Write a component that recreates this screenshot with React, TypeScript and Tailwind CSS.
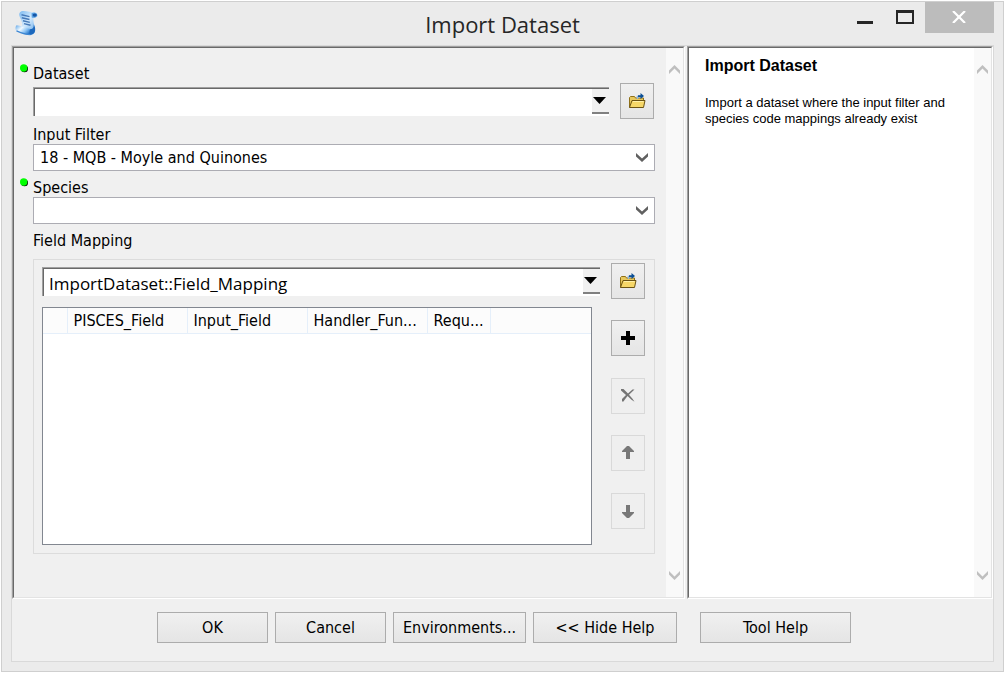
import { useState } from "react";
import type { ReactNode } from "react";

const LABEL = "pt-0.5 text-[16px] leading-[18px] text-black";
const SUNKEN =
  "border-t border-l border-r border-b border-t-[#a0a0a0] border-l-[#a0a0a0] border-r-white border-b-white";
const SUNKEN_INNER =
  "border border-t-[#696969] border-l-[#696969] border-r-[#e3e3e3] border-b-[#e3e3e3]";

function ScriptIcon() {
  return (
    <svg width="24" height="26" viewBox="0 0 24 26" aria-hidden="true">
      <defs>
        <linearGradient id="sheet" x1="0" y1="0" x2="1" y2="1">
          <stop offset="0" stopColor="#7dbaf0" />
          <stop offset="0.45" stopColor="#d3eafd" />
          <stop offset="1" stopColor="#4a98e2" />
        </linearGradient>
        <linearGradient id="roll" x1="0" y1="0" x2="1" y2="0.6">
          <stop offset="0" stopColor="#5fa6e8" />
          <stop offset="0.4" stopColor="#f2faff" />
          <stop offset="0.7" stopColor="#8cc4f5" />
          <stop offset="1" stopColor="#1d6fc6" />
        </linearGradient>
      </defs>
      <path d="M6 1.500C9 .3 15 2.200 20.500 2.700c2.500.4 2.800 3.900.6 4.600L18.500 8c-.8 4 2 8.500 1.500 13-.3 2.300-2 3.700-4 3.700L6 18.500C9.500 14 5 8.500 4.300 5.500 4 4 4.500 2.300 6 1.500Z" fill="url(#sheet)" />
      <path d="M16.500 3.200c2.500-1.300 5.800-.6 5.600 2.100-.3 2.600-3.600 2.900-5.400 2.300Z" fill="#5aa2e4" />
      <ellipse cx="19.700" cy="5.100" rx="2.100" ry="1.700" fill="#1656a6" />
      <path d="M6.500 4.800 14.500 6.600M6.800 7.700l7.700 1.800M8 10.700l6.800 1.700M9 13.600l6.500 1.600" stroke="#4679b8" strokeWidth="1.400" />
      <path d="M1.500 15.200c4 .2 9.500 2.500 14 3.700 1.800.7 2.200 4.700.2 5.800C11 25 5 22.700 1.300 21.200.2 19.700.2 16.200 1.500 15.200Z" fill="url(#roll)" />
      <path d="M1.500 20.900c4 1.700 9.500 3.900 14 3.800" stroke="#3d86d2" strokeWidth="1.200" fill="none" />
      <path d="M15.300 19.300c3-.3 3.800-2.500 3.300-5 2.300 3.500 2.700 9.500-2.500 10.400-1.800.1-2-4.400-.8-5.400Z" fill="#1c68bd" />
    </svg>
  );
}

function FolderIcon() {
  return (
    <svg width="17" height="16" viewBox="0 0 17 16" aria-hidden="true">
      <path d="M.5 14.500V4.500l1-1h4l1 1.500h8v3" fill="#e8c85c" stroke="#8f7018" />
      <path d="M.5 14.500 3 7.500h13l-1.500 7Z" fill="#f6d768" stroke="#6b5312" />
      <path d="M4 8.500h10.500" stroke="#fff0a8" />
      <path d="M8.500 6V3.500h3" fill="none" stroke="#8fb6dc" strokeWidth="1.500" />
      <path d="M9 2.200h2.500V0l3.500 3-3.500 3V4H9Z" fill="#0b4f96" />
    </svg>
  );
}

function ScrollChevron({ down = false }: { down?: boolean }) {
  return (
    <svg width="11" height="9" viewBox="0 0 11 9" aria-hidden="true">
      <path
        d={down ? "M0 0v3.500L5.500 9 11 3.500V0L5.500 5.500Z" : "M0 9V5.500L5.500 0 11 5.500V9L5.500 3.500Z"}
        fill="#bfbfbf"
      />
    </svg>
  );
}

function ScrollBar() {
  return (
    <div className="flex w-[17px] shrink-0 flex-col items-center justify-between bg-[#f9f9f9] py-[17px]">
      <button type="button" aria-label="Scroll up"><ScrollChevron /></button>
      <button type="button" aria-label="Scroll down"><ScrollChevron down /></button>
    </div>
  );
}

function Pane({ className, children }: { className: string; children: ReactNode }) {
  return (
    <div className={`flex ${SUNKEN} ${className}`}>
      <div className={`flex min-w-0 flex-1 ${SUNKEN_INNER}`}>
        {children}
        <ScrollBar />
      </div>
    </div>
  );
}

function FieldLabel({ id, required = false, children }: { id: string; required?: boolean; children: string }) {
  return (
    <label htmlFor={id} className={`flex ${LABEL}`}>
      {required && (
        <span className="-mt-px -ml-[13px] w-[13px]">
          <svg width="8" height="9" viewBox="0 0 8 9" aria-hidden="true">
            <circle cx="4.500" cy="4.800" r="3.500" fill="#000" />
            <circle cx="3.700" cy="4" r="3.700" fill="#00ff00" />
          </svg>
        </span>
      )}
      {children}
    </label>
  );
}

function PathCombo({ id, initial = "" }: { id: string; initial?: string }) {
  const [value, setValue] = useState(initial);
  return (
    <div className="flex h-[29px] min-w-0 flex-1 border-t border-l border-[#a0a0a0] bg-white">
      <div className="flex min-w-0 flex-1 border-t border-l border-[#696969]">
        <input
          id={id}
          value={value}
          onChange={(e) => setValue(e.target.value)}
          className="min-w-0 flex-1 px-[5px] pt-1 font-['Open_Sans',sans-serif] text-[17px] leading-6 text-black outline-none"
        />
        <button
          type="button"
          aria-label="Show list"
          className="mb-0.5 flex w-[17px] items-center justify-center border-b-2 border-[#808080] bg-[#f0f0f0] pr-0.5"
        >
          <svg width="13" height="7" viewBox="0 0 13 7" aria-hidden="true">
            <path d="M0 0h13L6.500 7Z" fill="#000" />
          </svg>
        </button>
      </div>
    </div>
  );
}

function DropDown({ id, options }: { id: string; options: string[] }) {
  return (
    <div className="relative">
      <select
        id={id}
        className="block h-[27px] w-full appearance-none border border-[#acacb3] bg-white pr-8 pl-1.5 text-[16px] leading-6 text-black outline-none"
      >
        {options.map((o) => (
          <option key={o}>{o}</option>
        ))}
      </select>
      <svg className="pointer-events-none absolute top-[9px] right-[7px]" width="12" height="9" viewBox="0 0 12 9" aria-hidden="true">
        <path d="M0 0v3.500L6 9l6-5.500V0L6 5.500Z" fill="#606060" />
      </svg>
    </div>
  );
}

function ToolButton({ label, disabled = false, children }: { label: string; disabled?: boolean; children: ReactNode }) {
  return (
    <button
      type="button"
      aria-label={label}
      disabled={disabled}
      className="flex h-9 w-[34px] shrink-0 items-center justify-center border border-[#acacac] bg-linear-to-b from-[#f0f0f0] to-[#e5e5e5] disabled:border-[#d9d9d9] disabled:from-[#efefef] disabled:to-[#efefef]"
    >
      {children}
    </button>
  );
}

function FooterButton({ className, children }: { className: string; children: string }) {
  return (
    <button
      type="button"
      className={`h-[31px] border border-[#acacac] bg-linear-to-b from-[#f0f0f0] to-[#e5e5e5] pt-px text-[16px] leading-6 whitespace-nowrap text-black ${className}`}
    >
      {children}
    </button>
  );
}

const COLUMNS = [
  { title: "", width: "w-6" },
  { title: "PISCES_Field", width: "w-[120px]" },
  { title: "Input_Field", width: "w-[120px]" },
  { title: "Handler_Fun...", width: "w-[120px]" },
  { title: "Requ...", width: "w-[63px]" },
];

export default function App() {
  return (
    <div className="min-h-screen bg-white p-px font-['DejaVu_Sans_Condensed','Noto_Sans',sans-serif]">
      <main className="flex min-h-[calc(100vh-2px)] flex-col border border-[#cfcfcf] bg-[#ebebeb]">
        <header className="grid h-[43px] grid-cols-[1fr_auto_1fr] items-start">
          <div className="pt-2 pl-[13px]"><ScriptIcon /></div>
          <h1 className="pt-[7px] font-['Open_Sans',sans-serif] text-[22px] leading-[30px] text-[#262626]">Import Dataset</h1>
          <div className="flex justify-end pr-[9px]">
            <button type="button" aria-label="Minimize" className="flex h-[31px] w-10 items-start justify-center">
              <svg width="16" height="22" viewBox="0 0 16 22" aria-hidden="true"><path d="M0 19h16v3H0Z" fill="#262626" /></svg>
            </button>
            <button type="button" aria-label="Maximize" className="flex h-[31px] w-10 items-start justify-center pt-2">
              <svg width="18" height="14" viewBox="0 0 18 14" aria-hidden="true"><path d="M0 0h18v14H0ZM2 3v9h14V3Z" fill="#262626" fillRule="evenodd" /></svg>
            </button>
            <button type="button" aria-label="Close" className="flex h-[31px] w-[69px] items-center justify-center bg-[#bcbcbc] pr-0.5 pb-0.5">
              <svg width="14" height="12" viewBox="0 0 14 12" aria-hidden="true"><path d="m1 0 12 12M13 0 1 12" stroke="#fff" strokeWidth="2.200" /></svg>
            </button>
          </div>
        </header>

        <div className="mx-[9px] mb-[9px] flex flex-1 flex-col border border-[#d9d9d9] bg-[#f0f0f0]">
          <div className="flex flex-1 gap-0.5">
            <Pane className="min-w-0 flex-1">
              <form className="flex min-w-0 flex-1 flex-col pt-[15px] pr-[11px] pb-[43px] pl-[19px]">
                <FieldLabel id="dataset" required>Dataset</FieldLabel>
                <div className="flex items-center gap-[11px] pr-px">
                  <PathCombo id="dataset" />
                  <ToolButton label="Browse for dataset"><FolderIcon /></ToolButton>
                </div>
                <div className="mt-[5px]">
                  <FieldLabel id="filter">Input Filter</FieldLabel>
                  <DropDown id="filter" options={["18 - MQB - Moyle and Quinones"]} />
                </div>
                <div className="mt-[6px]">
                  <FieldLabel id="species" required>Species</FieldLabel>
                  <DropDown id="species" options={[""]} />
                </div>
                <div className="mt-[6px] flex flex-1 flex-col">
                  <FieldLabel id="mapping">Field Mapping</FieldLabel>
                  <div className="mt-[9px] flex flex-1 flex-col border border-[#dcdcdc] pt-[3px] pr-[9px] pb-2 pl-2">
                    <div className="flex items-center gap-[11px]">
                      <PathCombo id="mapping" initial="ImportDataset::Field_Mapping" />
                      <ToolButton label="Browse for field mapping"><FolderIcon /></ToolButton>
                    </div>
                    <div className="mt-2 flex flex-1 gap-[19px]">
                      <div className="min-w-0 flex-1 border border-[#828790] bg-white">
                        <table className="w-full table-fixed border-collapse">
                          <thead>
                            <tr className="h-[25px] bg-[#fcfcfc]">
                              {COLUMNS.map((c) => (
                                <th
                                  key={c.title}
                                  scope="col"
                                  className={`${c.width} border-r border-b border-[#e5effa] p-0 pt-0.5 pl-1.5 text-left text-[16px] leading-[22px] font-normal whitespace-nowrap text-black`}
                                >
                                  {c.title}
                                </th>
                              ))}
                              <th className="border-b border-[#e5effa] p-0" />
                            </tr>
                          </thead>
                        </table>
                      </div>
                      <div className="flex flex-col justify-between gap-2 pt-[13px] pb-4">
                        <ToolButton label="Add row">
                          <svg width="14" height="14" viewBox="0 0 14 14" aria-hidden="true"><path d="M5 0h4v5h5v4H9v5H5V9H0V5h5Z" fill="#000" /></svg>
                        </ToolButton>
                        <ToolButton label="Remove row" disabled>
                          <svg width="14" height="14" viewBox="0 0 14 14" aria-hidden="true">
                            <path d="M0 0h2.500l4.500 4.500L11.500.5H13.500L8 5.700l3.500 4 2 3-3-2L6.500 7 3.500 11l-1 1.500H1V10L5 5.900 0 1.500Z" fill="#747474" />
                          </svg>
                        </ToolButton>
                        <ToolButton label="Move row up" disabled>
                          <svg width="12" height="14" viewBox="0 0 12 14" aria-hidden="true"><path d="M5 0h2l5 5v1H8v7H4V6H0V5Z" fill="#787878" /></svg>
                        </ToolButton>
                        <ToolButton label="Move row down" disabled>
                          <svg width="12" height="14" viewBox="0 0 12 14" aria-hidden="true"><path d="M5 14h2l5-5V8H8V1H4v7H0v1Z" fill="#787878" /></svg>
                        </ToolButton>
                      </div>
                    </div>
                  </div>
                </div>
              </form>
            </Pane>
            <Pane className="w-[306px] shrink-0 bg-white">
              <section className="min-w-0 flex-1 pt-2 pl-4 font-['Liberation_Sans',sans-serif] text-black">
                <h2 className="text-[16px] leading-5 font-bold">Import Dataset</h2>
                <p className="mt-[19px] pr-4 text-[13px] leading-4">
                  Import a dataset where the input filter and species code mappings already exist
                </p>
              </section>
            </Pane>
          </div>
          <footer className="flex justify-center gap-[7px] pt-[13px] pb-[18px] pl-[3px]">
            <FooterButton className="w-[111px]">OK</FooterButton>
            <FooterButton className="w-[111px]">Cancel</FooterButton>
            <FooterButton className="w-[133px]">Environments...</FooterButton>
            <FooterButton className="w-36">{"<< Hide Help"}</FooterButton>
            <FooterButton className="ml-4 w-[151px]">Tool Help</FooterButton>
          </footer>
        </div>
      </main>
    </div>
  );
}
